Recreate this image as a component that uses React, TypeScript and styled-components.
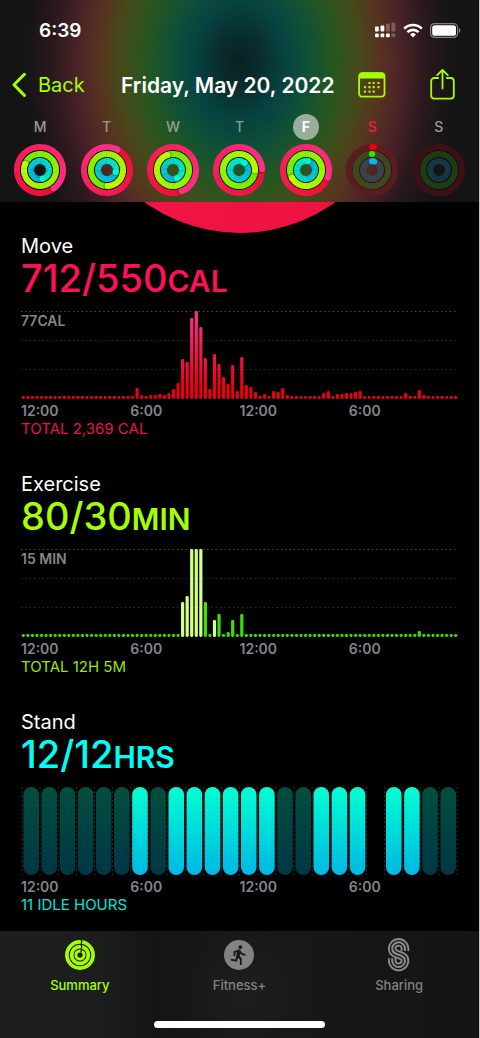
import React from "react";
import styled, { createGlobalStyle } from "styled-components";
import { MdDirectionsRun } from "react-icons/md";

const LIME = "#a6ff00";
const FONT = `Inter, "Liberation Sans", sans-serif`;

const GlobalStyle = createGlobalStyle`
  * { box-sizing: border-box; }
  body { margin: 0; background: #000; font-family: ${FONT}; }
  button { font: inherit; color: inherit; background: none; border: 0; padding: 0; cursor: pointer; }
  svg { display: block; }
`;

const Screen = styled.div`
  display: flex;
  flex-direction: column;
  min-height: 100vh;
  background: #000;
  color: #fff;
  border-right: 1px solid #c4c4c4;
`;

const Header = styled.header`
  padding-bottom: 6px;
  background: radial-gradient(
      ellipse 220px 290px at 50% 62px,
      #0b2022 0%,
      #092c2e 9%,
      #064240 20%,
      #0f5038 31%,
      #26571f 43%,
      #454a1a 54%,
      #57331f 64%,
      #4b2428 73%,
      #2a181d 85%,
      #171516 96%,
      #141414 100%
    );
`;

const StatusBar = styled.div`
  display: flex;
  align-items: center;
  justify-content: space-between;
  height: 60px;
  padding: 0 18px 0 39px;
  font-size: 19px;
  font-weight: 600;
`;

const StatusIcons = styled.div`
  display: flex;
  align-items: center;
  gap: 7px;
`;

const NavBar = styled.nav`
  display: flex;
  align-items: center;
  height: 50px;
  padding: 0 24px 0 12px;
  color: ${LIME};
`;

const BackButton = styled.button`
  display: flex;
  align-items: center;
  gap: 11px;
  width: 109px;
  font-size: 20px;
`;

const Title = styled.h1`
  margin: 0;
  color: #fff;
  font-size: 21px;
  font-weight: 600;
  white-space: nowrap;
`;

const NavActions = styled.div`
  display: flex;
  align-items: center;
  gap: 44px;
  margin-left: auto;
`;

const Week = styled.div`
  display: grid;
  grid-template-columns: repeat(7, 1fr);
  padding: 4px 7px 0;
`;

const DayButton = styled.button`
  display: flex;
  flex-direction: column;
  align-items: center;
  gap: 4px;
`;

const DayLetter = styled.span<{ $color: string; $selected: boolean }>`
  width: 26px;
  height: 26px;
  border-radius: 50%;
  font-size: 14px;
  line-height: 26px;
  font-weight: ${(p) => (p.$selected ? 700 : 500)};
  color: ${(p) => p.$color};
  background: ${(p) => (p.$selected ? "rgba(212, 216, 212, 0.68)" : "transparent")};
`;

const RingPeek = styled.div`
  display: flex;
  align-items: flex-end;
  justify-content: center;
  height: 31px;
  overflow: hidden;
`;

const RingDisc = styled.div`
  flex: none;
  width: 326px;
  height: 326px;
  border-radius: 50%;
  background: linear-gradient(90deg, #f5154a, #ee1340 50%, #ee1340);
`;

const Main = styled.main`
  flex: 1;
`;

const Metric = styled.section`
  padding: 0 21px 33px;

  &:last-child {
    padding-bottom: 17px;
  }
`;

const MetricName = styled.h2`
  margin: 0;
  font-size: 20px;
  line-height: 26px;
  font-weight: 400;
`;

const MetricValue = styled.p<{ $color: string }>`
  margin: 0 0 14px;
  color: ${(p) => p.$color};
  font-size: 38px;
  line-height: 38px;
  font-weight: 500;
  white-space: nowrap;
`;

const Unit = styled.span`
  font-size: 30px;
  line-height: 30px;
  font-weight: 600;
`;

const ChartBox = styled.div`
  position: relative;

  svg {
    width: 100%;
    height: 88px;
    overflow: visible;
  }
`;

const ScaleLabel = styled.span`
  position: absolute;
  left: 0;
  top: 1px;
  color: #85858a;
  font-size: 14px;
  line-height: 18px;
  font-weight: 600;
`;

const Axis = styled.div`
  display: grid;
  grid-template-columns: repeat(4, 1fr);
  margin-top: 3px;
  color: #85858a;
  font-size: 14px;
  line-height: 18px;
  font-weight: 600;
`;

const Total = styled.p<{ $color: string }>`
  margin: 0;
  color: ${(p) => p.$color};
  font-size: 15px;
  line-height: 18px;
`;

const TabBar = styled.footer`
  display: flex;
  flex-direction: column;
  align-items: center;
  justify-content: space-between;
  height: 107px;
  padding: 7px 0 10px;
  background: radial-gradient(ellipse 60px 60px at 51% 60%, #1d1f1f, transparent),
    linear-gradient(90deg, #1d1e1e, #1c1d1d 20%, #151515 32%, #181919 50%, #141414);
`;

const Tabs = styled.nav`
  display: grid;
  grid-template-columns: repeat(3, 1fr);
  width: 100%;
`;

const TabButton = styled.button<{ $active?: boolean }>`
  display: flex;
  flex-direction: column;
  align-items: center;
  gap: 4px;
  color: ${(p) => (p.$active ? LIME : "#828282")};
  font-size: 13px;
  line-height: 18px;
  font-weight: 500;
`;

const TabIcon = styled.span`
  display: grid;
  place-items: center;
  height: 34px;
`;

const FitnessBadge = styled.span`
  display: grid;
  place-items: center;
  width: 30px;
  height: 30px;
  border-radius: 50%;
  background: #828282;
  color: #181919;
`;

const HomeIndicator = styled.div`
  width: 171px;
  height: 7px;
  border-radius: 4px;
  background: #fff;
`;

type Rgb = [number, number, number];

const RING_STYLES: { r: number; from: Rgb; to: Rgb }[] = [
  { r: 23, from: [238, 15, 50], to: [255, 48, 136] },
  { r: 16, from: [110, 240, 0], to: [190, 255, 0] },
  { r: 9, from: [0, 184, 232], to: [0, 246, 208] },
];

const SEGMENTS = 40;

function point(r: number, deg: number): [number, number] {
  const a = ((deg - 90) * Math.PI) / 180;
  return [26 + r * Math.cos(a), 26 + r * Math.sin(a)];
}

function arc(r: number, a0: number, a1: number) {
  const [x0, y0] = point(r, a0);
  const [x1, y1] = point(r, a1);
  return `M${x0.toFixed(2)} ${y0.toFixed(2)}A${r} ${r} 0 0 1 ${x1.toFixed(2)} ${y1.toFixed(2)}`;
}

function mix(from: Rgb, to: Rgb, t: number) {
  return `rgb(${from.map((c, i) => Math.round(c + (to[i] - c) * t)).join(",")})`;
}

/* Closed activity rings; each head angle is where that ring's progress ends. */
function FullRings({ heads }: { heads: number[] }) {
  return (
    <svg width="52" height="52" viewBox="0 0 52 52" aria-hidden="true">
      <circle cx="26" cy="26" r="20" fill="none" stroke="rgba(0,0,0,.6)" strokeWidth="2" />
      <circle cx="26" cy="26" r="12.5" fill="none" stroke="rgba(0,0,0,.65)" strokeWidth="2" />
      {RING_STYLES.map(({ r, from, to }, k) => {
        const head = heads[k];
        const [hx, hy] = point(r, head);
        const [sx, sy] = point(r, head + 60 / r);
        return (
          <g key={r} fill="none" strokeWidth="6">
            {Array.from({ length: SEGMENTS }, (_, i) => {
              const step = 360 / SEGMENTS;
              const a = head + i * step;
              return <path key={i} d={arc(r, a, a + step + 1)} stroke={mix(from, to, i / (SEGMENTS - 1))} />;
            })}
            <circle cx={sx} cy={sy} r="3" fill="rgba(0,0,0,.28)" />
            <circle cx={hx} cy={hy} r="3" fill={mix(from, to, 1)} />
          </g>
        );
      })}
    </svg>
  );
}

function EmptyRings({ started }: { started: boolean }) {
  const tracks = started ? ["#5b1c20", "#3f481d", "#38434b"] : ["#3c1115", "#1f3b12", "#143841"];
  return (
    <svg width="52" height="52" viewBox="0 0 52 52" fill="none" aria-hidden="true">
      <circle cx="26" cy="26" r="20" stroke="rgba(0,0,0,.3)" strokeWidth="2" />
      <circle cx="26" cy="26" r="12.5" stroke="rgba(0,0,0,.5)" strokeWidth="2" />
      {RING_STYLES.map(({ r }, i) => (
        <circle key={r} cx="26" cy="26" r={r} stroke={tracks[i]} strokeWidth="6" />
      ))}
      {started && (
        <g strokeWidth="6" strokeLinecap="round">
          <path d="M26 3h2" stroke="#ee0010" />
          <path d="M26 10h.2" stroke="#35e300" />
          <path d="M26 17.2l2.2.2" stroke="#00b9e8" />
        </g>
      )}
    </svg>
  );
}

type Day = { name: string; letter: string; color: string; heads?: number[]; started?: boolean; selected?: boolean };

const DAYS: Day[] = [
  { name: "Monday", letter: "M", color: "#9a9899", heads: [144, 293, 165] },
  { name: "Tuesday", letter: "T", color: "#9a9294", heads: [28, 178, 105] },
  { name: "Wednesday", letter: "W", color: "#9c9c90", heads: [158, 340, 155] },
  { name: "Thursday", letter: "T", color: "#8a9c94", heads: [88, 92, 40] },
  { name: "Friday", letter: "F", color: "#ffffff", heads: [110, 241, 15], selected: true },
  { name: "Saturday", letter: "S", color: "#fa1850", started: true },
  { name: "Sunday", letter: "S", color: "#98989a" },
];

const BARS = 96;
const CHART_W = 437;
const CHART_H = 88;

const MOVE: Record<number, number> = {
  25: 11, 26: 4, 28: 4, 29: 4, 30: 5, 31: 4, 32: 6, 33: 10, 34: 16, 35: 40, 36: 37, 37: 81, 38: 88, 39: 72,
  40: 41, 41: 10, 42: 45, 43: 35, 44: 22, 45: 15, 46: 34, 47: 8, 48: 42, 49: 14, 50: 12, 51: 7, 53: 5, 55: 8,
  56: 7, 57: 11, 58: 4, 66: 6, 67: 8, 69: 5, 70: 5, 71: 6, 72: 6, 73: 7, 74: 8, 84: 6, 87: 9, 88: 4,
};

const EXERCISE: Record<number, number> = {
  35: 35, 36: 41, 37: 88, 38: 88, 39: 88, 40: 35, 42: 17, 43: 23, 45: 5, 46: 17, 48: 23, 87: 6,
};

const WORKOUT_BARS = [35, 36, 37, 38, 39, 42];

function BarChart(props: {
  id: string;
  label: string;
  bars: Record<number, number>;
  low: string;
  high: string;
  highlighted?: number[];
}) {
  const { id, label, bars, low, high, highlighted = [] } = props;
  const pitch = CHART_W / BARS;
  return (
    <ChartBox>
      <svg viewBox={`0 0 ${CHART_W} ${CHART_H}`} preserveAspectRatio="none" role="img" aria-label={label}>
        <defs>
          <linearGradient id={id} gradientUnits="userSpaceOnUse" x1="0" y1={CHART_H} x2="0" y2="0">
            <stop offset="0" stopColor={low} />
            <stop offset="0.15" stopColor={low} />
            <stop offset="1" stopColor={high} />
          </linearGradient>
        </defs>
        {[0.5, 29.5, 58.5].map((y, i) => (
          <path key={y} d={`M0 ${y}H${CHART_W}`} stroke={i === 0 ? "#4a4a4a" : "#2e2e2e"} strokeDasharray="1.5 2.83" />
        ))}
        {Array.from({ length: BARS }, (_, i) => {
          const h = bars[i] ?? 3;
          return (
            <rect
              key={i}
              x={i * pitch + 0.7}
              y={CHART_H - h}
              width="3.2"
              height={h}
              rx="1.4"
              fill={highlighted.includes(i) ? "#d4ff85" : `url(#${id})`}
            />
          );
        })}
      </svg>
      <ScaleLabel>{label}</ScaleLabel>
    </ChartBox>
  );
}

/* One character per hour: s = stood, i = idle, space = no data. */
const STAND_HOURS = "iiiiiisissssssiisss ssii";

function StandChart() {
  const pitch = 18.13;
  return (
    <ChartBox>
      <svg viewBox={`0 0 ${CHART_W} ${CHART_H}`} preserveAspectRatio="none" role="img" aria-label="Stand hours">
        <defs>
          <linearGradient id="stood" x1="0" y1="0" x2="0" y2="1">
            <stop offset="0" stopColor="#00ffd2" />
            <stop offset="1" stopColor="#00b7e4" />
          </linearGradient>
          <linearGradient id="idle" x1="0" y1="0" x2="0" y2="1">
            <stop offset="0" stopColor="#004f3f" />
            <stop offset="1" stopColor="#003645" />
          </linearGradient>
        </defs>
        {Array.from({ length: 25 }, (_, i) => (
          <path key={i} d={`M${1 + i * pitch} 0V${CHART_H}`} stroke="#3c3c3c" strokeDasharray="1.5 2.83" />
        ))}
        {STAND_HOURS.split("").map((c, i) =>
          c === " " ? null : (
            <rect
              key={i}
              x={2.4 + i * pitch}
              y="0"
              width="15.6"
              height={CHART_H}
              rx="7.8"
              fill={c === "s" ? "url(#stood)" : "url(#idle)"}
            />
          )
        )}
      </svg>
    </ChartBox>
  );
}

function MetricBlock(props: {
  name: string;
  value: string;
  unit: string;
  total: string;
  color: string;
  totalColor: string;
  children: React.ReactNode;
}) {
  return (
    <Metric>
      <MetricName>{props.name}</MetricName>
      <MetricValue $color={props.color}>
        {props.value}
        <Unit>{props.unit}</Unit>
      </MetricValue>
      {props.children}
      <Axis>
        <span>12:00</span>
        <span>6:00</span>
        <span>12:00</span>
        <span>6:00</span>
      </Axis>
      <Total $color={props.totalColor}>{props.total}</Total>
    </Metric>
  );
}

function SignalIcon() {
  const heights = [5, 6, 8, 9];
  return (
    <svg width="21" height="16" viewBox="0 0 21 16" fill="#fff" aria-label="Signal">
      {heights.map((h, i) => (
        <rect key={i} x={i * 5.5} y={9.5 - h} width="3.8" height={h} rx="1" opacity={i < 2 ? 1 : 0.25} />
      ))}
      {heights.map((_, i) => (
        <rect key={i} x={i * 5.5} y="11.5" width="3.8" height="3.8" rx="1" opacity={i < 3 ? 1 : 0.25} />
      ))}
    </svg>
  );
}

function WifiIcon() {
  return (
    <svg width="20" height="15" viewBox="0 0 20 15" fill="none" stroke="#fff" strokeWidth="2.6" aria-label="Wi-Fi">
      <path d="M1.2 5.6a12.6 12.6 0 0 1 17.6 0" />
      <path d="M4.4 9.1a8.1 8.1 0 0 1 11.2 0" />
      <path d="M10 14.4l-2.9-2.9a4.2 4.2 0 0 1 5.8 0z" fill="#fff" stroke="none" />
    </svg>
  );
}

function BatteryIcon() {
  return (
    <svg width="31" height="15" viewBox="0 0 31 15" fill="none" aria-label="Battery">
      <rect x="0.6" y="0.6" width="27" height="13.8" rx="4" stroke="#fff" strokeOpacity="0.45" strokeWidth="1.2" />
      <rect x="2.2" y="2.2" width="23.8" height="10.6" rx="2.6" fill="#fff" />
      <path d="M29 5.2c1.8.7 1.8 3.9 0 4.6z" fill="#fff" fillOpacity="0.5" />
    </svg>
  );
}

function ChevronIcon() {
  return (
    <svg width="15" height="26" viewBox="0 0 15 26" fill="none" stroke={LIME} strokeWidth="3" strokeLinecap="round" strokeLinejoin="round" aria-hidden="true">
      <path d="M12.4 2.4L2 12.8l10.4 10.6" />
    </svg>
  );
}

function CalendarIcon() {
  const dots = [
    [11.5, 11], [15.7, 11], [20.5, 11],
    [7, 15.2], [11.5, 15.2], [15.7, 15.2], [20.5, 15.2],
    [7, 19.6], [11.5, 19.6], [15.7, 19.6],
  ];
  return (
    <svg width="28" height="26" viewBox="0 0 28 26" aria-hidden="true">
      <rect x="1.1" y="1.1" width="25.4" height="23.6" rx="3.2" fill="none" stroke={LIME} strokeWidth="1.8" />
      <path d="M1 6.6V4a3.4 3.4 0 0 1 3.4-3.4h18.8A3.4 3.4 0 0 1 26.6 4v2.6z" fill={LIME} />
      {dots.map(([x, y]) => (
        <rect key={`${x}-${y}`} x={x - 1.1} y={y - 1.1} width="2.2" height="2.2" rx="0.6" fill={LIME} />
      ))}
    </svg>
  );
}

function ShareIcon() {
  return (
    <svg width="25" height="32" viewBox="0 0 25 32" fill="none" stroke={LIME} strokeWidth="1.8" strokeLinecap="round" strokeLinejoin="round" aria-hidden="true">
      <path d="M8.2 9H4.4A3.2 3.2 0 0 0 1.2 12.2v14.2a3.2 3.2 0 0 0 3.2 3.2h16.2a3.2 3.2 0 0 0 3.2-3.2V12.2A3.2 3.2 0 0 0 20.6 9h-3.8" />
      <path d="M12.5 19.4V1M7.2 6.2l5.3-5.2 5.3 5.2" />
    </svg>
  );
}

function SummaryIcon() {
  return (
    <svg width="30" height="30" viewBox="0 0 30 30" fill="none" stroke={LIME} aria-hidden="true">
      <circle cx="15" cy="15" r="13.1" strokeWidth="3.7" />
      <circle cx="15" cy="15" r="8.4" strokeWidth="3.7" />
      <circle cx="15" cy="15" r="4.1" strokeWidth="3" />
      <path d="M15.9 0c1 .9 1 2.9 0 3.8M15.9 4.8c1 .9 1 2.9 0 3.6M15.6 9.2c1 .6 1 2.4 0 3.2" stroke="#1c1d1d" strokeWidth="1.3" />
    </svg>
  );
}

function SharingIcon() {
  const d = "M17 13V10.7A6.4 6.4 0 0 0 4.2 10.7C4.2 18.4 17 15.2 17 22.6A6.4 6.4 0 0 1 4.2 22.6V20.3";
  return (
    <svg width="22" height="34" viewBox="0 0 22 34" fill="none" aria-hidden="true">
      <path d={d} stroke="#8a8a8a" strokeWidth="8.6" />
      <path d={d} stroke="#161616" strokeWidth="4.8" />
      <path d={d} stroke="#8a8a8a" strokeWidth="2.1" />
    </svg>
  );
}

export default function App() {
  return (
    <Screen>
      <GlobalStyle />
      <Header>
        <StatusBar>
          <span>6:39</span>
          <StatusIcons>
            <SignalIcon />
            <WifiIcon />
            <BatteryIcon />
          </StatusIcons>
        </StatusBar>
        <NavBar>
          <BackButton type="button">
            <ChevronIcon />
            Back
          </BackButton>
          <Title>Friday, May 20, 2022</Title>
          <NavActions>
            <button type="button" aria-label="Calendar">
              <CalendarIcon />
            </button>
            <button type="button" aria-label="Share">
              <ShareIcon />
            </button>
          </NavActions>
        </NavBar>
        <Week>
          {DAYS.map((day) => (
            <DayButton key={day.name} type="button" aria-label={day.name} aria-pressed={!!day.selected}>
              <DayLetter $color={day.color} $selected={!!day.selected}>
                {day.letter}
              </DayLetter>
              {day.heads ? <FullRings heads={day.heads} /> : <EmptyRings started={!!day.started} />}
            </DayButton>
          ))}
        </Week>
      </Header>
      <Main>
        <RingPeek>
          <RingDisc />
        </RingPeek>
        <MetricBlock name="Move" value="712/550" unit="CAL" total="TOTAL 2,369 CAL" color="#ff1155" totalColor="#e6144c">
          <BarChart id="move" label="77CAL" bars={MOVE} low="#ea0012" high="#ff3595" />
        </MetricBlock>
        <MetricBlock name="Exercise" value="80/30" unit="MIN" total="TOTAL 12H 5M" color={LIME} totalColor="#96e600">
          <BarChart id="exercise" label="15 MIN" bars={EXERCISE} low="#37e000" high="#70ff00" highlighted={WORKOUT_BARS} />
        </MetricBlock>
        <MetricBlock name="Stand" value="12/12" unit="HRS" total="11 IDLE HOURS" color="#00fff6" totalColor="#00e6d8">
          <StandChart />
        </MetricBlock>
      </Main>
      <TabBar>
        <Tabs>
          <TabButton type="button" $active>
            <TabIcon>
              <SummaryIcon />
            </TabIcon>
            Summary
          </TabButton>
          <TabButton type="button">
            <TabIcon>
              <FitnessBadge>
                <MdDirectionsRun size={22} />
              </FitnessBadge>
            </TabIcon>
            Fitness+
          </TabButton>
          <TabButton type="button">
            <TabIcon>
              <SharingIcon />
            </TabIcon>
            Sharing
          </TabButton>
        </Tabs>
        <HomeIndicator />
      </TabBar>
    </Screen>
  );
}
